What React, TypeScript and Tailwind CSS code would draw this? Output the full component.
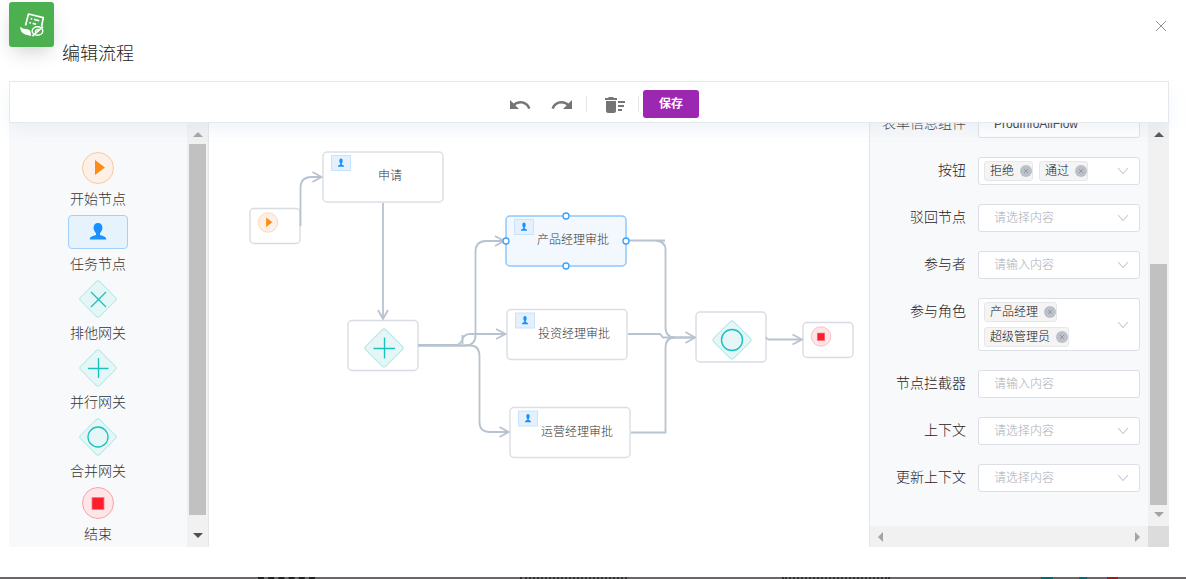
import type { ReactNode } from 'react';
import { MdUndo, MdRedo, MdDeleteSweep } from 'react-icons/md';

const EDGE = '#b8c3d0';

function AppIcon() {
  return (
    <svg viewBox="0 0 45 45" className="h-[45px] w-[45px]" fill="none" stroke="#fff" aria-hidden="true">
      <path d="M16.5 23.5 L19.5 12 L34.3 15.6 L32.6 24.5" strokeWidth="1.7" strokeLinejoin="round" />
      <path d="M21.7 16.6 l1.6 .4 M25 17.4 l5.2 1.3 M20.4 20.6 l1.6 .4 M23.6 21.4 l3.6 .9" strokeWidth="1.6" />
      <path d="M11 25.2 c1.2-.2 2 .3 2.6 1.2 l5 .8 c1.8 .4 3 1.4 3 3 l.6 3.8 -5.200-1.300 c-3.400-1-5.600-3.500-6-7.500z" fill="#fff" stroke="none" />
      <ellipse cx="28.500" cy="29" rx="5.300" ry="4.300" strokeWidth="1.500" />
      <path d="M26.500 31 C25.800 28.500 27.500 26.800 30 27.500" strokeWidth="1.300" />
      <path d="M34 24.600 L23.400 34.200" strokeWidth="1.700" />
    </svg>
  );
}

function PlayShape() {
  return (
    <g>
      <circle r="15.5" fill="#fdf0e6" stroke="#fbc99b" />
      <path d="M-3 -8 L7 -0.500 L-3 7Z" fill="#fd8c19" />
    </g>
  );
}

function StopShape() {
  return (
    <g>
      <circle r="15.5" fill="#fde5e8" stroke="#f8a2aa" />
      <rect x="-6" y="-5.500" width="12" height="12" fill="#fb1f2d" stroke="#f77a83" strokeWidth="0.8" />
    </g>
  );
}

function PersonShape() {
  return (
    <path
      d="M0 -9 C3 -9 4.600 -7 4.400 -4 C4.200 -1.500 3 0 2 1.200 V3 C4.500 4 8.300 4.200 8.300 7.500 H-8.300 C-8.300 4.200 -4.500 4 -2 3 V1.200 C-3 0 -4.200 -1.500 -4.400 -4 C-4.600 -7 -3 -9 0 -9Z"
      fill="#1890ff"
    />
  );
}

function Diamond({ children }: { children: ReactNode }) {
  return (
    <g>
      <rect x="-13.500" y="-13.500" width="27" height="27" rx="2.500" transform="rotate(45)" fill="#e4f7f6" stroke="#b5e8e5" />
      <g fill="none" stroke="#18c1c0" strokeWidth="1.3">{children}</g>
    </g>
  );
}

const CrossMark = () => <path d="M-7 -7 L8 8 M8 -7 L-7 8" />;
const PlusMark = () => <path d="M0.500 -10 V10 M-10 0.500 H10.500" />;
const RingMark = () => <circle r="10" />;

const palette = [
  {
    label: '开始节点',
    icon: <svg className="h-8 w-8" viewBox="-16 -16 32 32"><PlayShape /></svg>,
  },
  {
    label: '任务节点',
    icon: (
      <span className="flex h-[34px] w-[60px] items-center justify-center rounded border border-[#a3d0fb] bg-[#e6f2fc]">
        <svg className="h-5 w-5" viewBox="-10 -10 20 20"><PersonShape /></svg>
      </span>
    ),
  },
  { label: '排他网关', icon: <svg className="size-[38px]" viewBox="-19 -19 38 38"><Diamond><CrossMark /></Diamond></svg> },
  { label: '并行网关', icon: <svg className="size-[38px]" viewBox="-19 -19 38 38"><Diamond><PlusMark /></Diamond></svg> },
  { label: '合并网关', icon: <svg className="size-[38px]" viewBox="-19 -19 38 38"><Diamond><RingMark /></Diamond></svg> },
  { label: '结束', icon: <svg className="h-8 w-8" viewBox="-16 -16 32 32"><StopShape /></svg> },
];

function Triangle({ dir, dark = false }: { dir: 'up' | 'down' | 'left' | 'right'; dark?: boolean }) {
  const points = {
    up: '0,5 5,0 10,5',
    down: '0,0 10,0 5,5',
    left: '5,0 5,10 0,5',
    right: '0,0 5,5 0,10',
  }[dir];
  const wide = dir === 'up' || dir === 'down';
  return (
    <svg className={wide ? 'h-[5px] w-[10px]' : 'h-[10px] w-[5px]'} viewBox={wide ? '0 0 10 5' : '0 0 5 10'} aria-hidden="true">
      <polygon points={points} fill={dark ? '#505050' : '#a3a3a3'} />
    </svg>
  );
}

function VerticalBar({ upDark = false, downDark = false, children }: { upDark?: boolean; downDark?: boolean; children: ReactNode }) {
  return (
    <div className="flex w-[21px] shrink-0 flex-col bg-[#f1f1f1]">
      <div className="flex h-[21px] items-center justify-center pt-0.5"><Triangle dir="up" dark={upDark} /></div>
      <div className="flex flex-1 flex-col px-0.5">{children}</div>
      <div className="flex h-[21px] items-center justify-center pb-0.5"><Triangle dir="down" dark={downDark} /></div>
    </div>
  );
}

function TaskNode({ x, y, label, active = false }: { x: number; y: number; label: string; active?: boolean }) {
  return (
    <g transform={`translate(${x} ${y})`}>
      <rect width="120" height="50" rx="4" fill={active ? '#f3f8ff' : '#fff'} stroke={active ? '#8fc7fb' : '#dbdfe5'} strokeWidth="1.5" />
      <rect x="8.500" y="3.500" width="19" height="15" fill="#e4f1fd" stroke="#c9e3fb" />
      <g transform="translate(18 11) scale(0.38 0.5)"><PersonShape /></g>
      <text x="67" y="28" textAnchor="middle" fontSize="12" fill="#333">{label}</text>
      {active &&
        [[60, 0], [120, 25], [60, 50], [0, 25]].map(([cx, cy]) => (
          <circle key={`${cx}-${cy}`} cx={cx} cy={cy} r="3" fill="#fff" stroke="#3a9ff8" strokeWidth="1.300" />
        ))}
    </g>
  );
}

function BoxNode({ x, y, w, h, children }: { x: number; y: number; w: number; h: number; children: ReactNode }) {
  return (
    <g>
      <rect x={x} y={y} width={w} height={h} rx="4" fill="#fff" stroke="#d8dce3" strokeWidth="1.400" />
      {children}
    </g>
  );
}

function FlowCanvas() {
  return (
    <svg className="h-[424px] w-[660px] shrink-0" viewBox="209 123 660 424" role="img" aria-label="流程图">
      <BoxNode x={250} y={208.500} w={50} h={35}>
        <g transform="translate(268 222.500) scale(0.63)"><PlayShape /></g>
      </BoxNode>
      <TaskNode x={323} y={152} label="申请" />
      <BoxNode x={348} y={320.500} w={70} h={50}>
        <g transform="translate(384 348) scale(1.050)"><Diamond><PlusMark /></Diamond></g>
      </BoxNode>
      <TaskNode x={507} y={309.500} label="投资经理审批" />
      <TaskNode x={510} y={407.500} label="运营经理审批" />
      <BoxNode x={696} y={312} w={70} h={50}>
        <g transform="translate(732 340) scale(1.050)"><Diamond><RingMark /></Diamond></g>
      </BoxNode>
      <BoxNode x={803} y={322.500} w={50} h={35}>
        <g transform="translate(821 336.500) scale(0.63)"><StopShape /></g>
      </BoxNode>
      <g fill="none" stroke={EDGE} strokeWidth="1.800">
        <path d="M300.500 226 V188 Q300.500 177 311.500 177 H322" />
        <path d="M383 203 V319" />
        <path d="M418 345 H455 Q460 345 462 340 Q464 334 470 334 H506" />
        <path d="M418 345.500 H465 Q475.500 345.500 475.500 335 V252 Q475.500 241 486 241 H504" />
        <path d="M418 345.500 H470 Q479.500 345.500 479.500 356 V422 Q479.500 432 490 432 H509" />
        <path d="M462.500 335 V344" />
        <path d="M627 240.500 H665 M655 240.500 Q665.500 241 665.500 250 V327 Q665.500 337.500 675 337.500 H695" />
        <path d="M628 334 H660 L663 337.500 H695" />
        <path d="M631 432.500 H665.500 V348 Q665.500 337.500 675 337.500" />
        <path d="M766 337 Q767 339.500 769 339.500 H802" />
        <path d="M312.500 172 L321.500 177 L312.500 182 M378 310 L383 319 L388 310 M496 329 L505.500 334 L496 339 M495 236 L504 241 L495 246 M499.500 427 L508.500 432 L499.500 437 M685.500 332 L695 337.500 L685.500 343 M792.500 334.500 L802 339.500 L792.500 344.500" />
      </g>
      <TaskNode x={506} y={216} label="产品经理审批" active />
    </svg>
  );
}

function Chevron() {
  return (
    <svg className="h-[10px] w-3" viewBox="0 0 12 10" fill="none" stroke="#c4c8cf" strokeWidth="1.100" aria-hidden="true">
      <path d="M1 2 L6 7.500 L11 2" />
    </svg>
  );
}

function Tag({ text }: { text: string }) {
  return (
    <span className="flex h-5 items-center gap-1.5 rounded-[3px] border border-[#e6e7ea] bg-[#f4f4f5] pl-[5px] text-xs text-[#111]">
      {text}
      <button type="button" aria-label={`移除${text}`} className="flex size-3 items-center justify-center rounded-full bg-[#bcc0c8]">
        <svg className="size-3" viewBox="0 0 12 12" stroke="#8b8f97" strokeWidth="0.8" aria-hidden="true">
          <path d="M4 4 L8 8 M8 4 L4 8" />
        </svg>
      </button>
    </span>
  );
}

type FieldProps = { id: string; label: string; kind: 'text' | 'select' | 'tags'; hint?: string; value?: string; tags?: string[] };

const fields: FieldProps[] = [
  { id: 'form-component', label: '表单信息组件', kind: 'text', value: 'ProdInfoAllFlow' },
  { id: 'buttons', label: '按钮', kind: 'tags', tags: ['拒绝', '通过'] },
  { id: 'reject-node', label: '驳回节点', kind: 'select', hint: '请选择内容' },
  { id: 'participant', label: '参与者', kind: 'select', hint: '请输入内容' },
  { id: 'roles', label: '参与角色', kind: 'tags', tags: ['产品经理', '超级管理员'] },
  { id: 'interceptor', label: '节点拦截器', kind: 'text', hint: '请输入内容' },
  { id: 'context', label: '上下文', kind: 'select', hint: '请选择内容' },
  { id: 'update-context', label: '更新上下文', kind: 'select', hint: '请选择内容' },
];

function Field({ id, label, kind, hint, value, tags }: FieldProps) {
  const box = 'w-full rounded-[3px] border border-[#dcdfe6] bg-white text-xs';
  return (
    <div className="flex shrink-0 gap-3">
      <label id={`${id}-label`} htmlFor={id} className="flex-1 text-right text-sm leading-[27px] whitespace-nowrap text-[#1f2022]">
        {label}
      </label>
      <div className="relative w-[162px]">
        {kind === 'text' && (
          <input id={id} type="text" defaultValue={value} placeholder={hint} className={`${box} block h-7 px-[15px] text-[#222] placeholder:text-[#a9aeb8]`} />
        )}
        {kind === 'select' && (
          <select id={id} className={`${box} block h-7 appearance-none px-[15px] text-[#a9aeb8]`}>
            <option>{hint}</option>
          </select>
        )}
        {kind === 'tags' && (
          <div className={`${box} flex flex-wrap gap-x-1.5 gap-y-[5px] py-[3px] pr-8 pl-[5px]`}>
            {tags?.map((t) => <Tag key={t} text={t} />)}
          </div>
        )}
        {kind === 'select' && (
          <span className="pointer-events-none absolute inset-y-0 right-[11px] flex items-center"><Chevron /></span>
        )}
        {kind === 'tags' && (
          <button id={id} type="button" aria-labelledby={`${id}-label`} className="absolute inset-y-0 right-[11px] flex items-center"><Chevron /></button>
        )}
      </div>
    </div>
  );
}

export default function App() {
  return (
    <div className="flex h-screen min-h-[560px] flex-col overflow-hidden bg-white font-['Liberation_Sans','Noto_Sans_CJK_SC',sans-serif] font-light">
      <header className="flex h-[81px] shrink-0 items-start pt-0.5 pr-[19px] pl-[9px]">
        <div className="size-[45px] rounded-[3px] bg-[#4caf50] shadow-[0_8px_20px_-4px_rgba(0,0,0,0.2)]"><AppIcon /></div>
        <h1 className="ml-2 pt-[38px] text-lg leading-7 text-[#222]">编辑流程</h1>
        <button type="button" aria-label="关闭" className="mt-[18px] ml-auto">
          <svg className="size-3" viewBox="0 0 12 12" stroke="#909399" strokeWidth="1"><path d="M1 1 L11 11 M11 1 L1 11" /></svg>
        </button>
      </header>

      <main className="mr-[17px] mb-[30px] ml-[9px] flex min-h-0 flex-1 flex-col">
        <div className="z-10 flex h-[42px] shrink-0 items-center justify-center border border-[#e6e8eb] bg-white pt-1 pl-[29px] shadow-[0_8px_16px_rgba(205,218,230,0.28)]">
          <div className="flex items-center pt-0.5">
            <button type="button" aria-label="撤销" className="text-[#757575]"><MdUndo size={24} /></button>
            <button type="button" aria-label="重做" className="ml-[18px] text-[#757575]"><MdRedo size={24} /></button>
            <span className="mb-0.5 ml-3 h-4 w-px bg-[#e2e4e8]" />
            <button type="button" aria-label="清空" className="ml-4 text-[#757575]"><MdDeleteSweep size={24} /></button>
            <span className="mb-0.5 ml-[11px] h-4 w-px bg-[#e2e4e8]" />
          </div>
          <button type="button" className="ml-1 h-7 w-14 rounded-[3px] bg-[#9c27b0] text-xs font-bold text-white">保存</button>
        </div>

        <div className="flex min-h-0 flex-1">
          <aside className="flex w-[200px] shrink-0 border-r border-[#e3e6eb] bg-[#f8f9fb]">
            <ul className="flex min-w-0 flex-1 flex-col items-center overflow-hidden pt-[29px]">
              {palette.map((p) => (
                <li key={p.label} className="flex shrink-0 flex-col items-center text-sm text-[#333]">
                  {p.icon}
                  <span className="h-[31px] leading-[31px]">{p.label}</span>
                </li>
              ))}
            </ul>
            <VerticalBar downDark><div className="h-[97%] bg-[#c1c1c1]" /></VerticalBar>
          </aside>

          <section className="flex min-w-0 flex-1 justify-center overflow-hidden"><FlowCanvas /></section>

          <aside className="flex w-[300px] shrink-0 flex-col border-l border-[#e3e6eb] bg-[#f8f9fb]">
            <div className="flex min-h-0 flex-1">
              <form className="flex min-w-0 flex-1 flex-col justify-end gap-[19px] overflow-hidden pr-2 pb-[34px]">
                {fields.map((f) => <Field key={f.id} {...f} />)}
              </form>
              <VerticalBar upDark><div className="mt-auto h-2/3 bg-[#c1c1c1]" /></VerticalBar>
            </div>
            <div className="flex h-[21px] shrink-0 bg-[#f1f1f1]">
              <div className="flex flex-1 items-center justify-between px-2"><Triangle dir="left" /><Triangle dir="right" /></div>
              <div className="w-[21px] bg-[#dcdcdc]" />
            </div>
          </aside>
        </div>
      </main>

      <footer className="flex h-0.5 shrink-0 bg-[#696767] pr-[68px] pl-[258px]">
        <span className="w-[57px] border-t-2 border-dashed border-[#222]" />
        <span className="ml-[205px] w-[107px] border-t-2 border-dotted border-[#333]" />
        <span className="ml-[155px] w-[108px] border-t-2 border-dotted border-[#333]" />
        <span className="ml-auto w-3 bg-[#006b75]" />
        <span className="ml-[26px] w-2 bg-[#006b75]" />
        <span className="ml-5 w-[11px] bg-[#9c1b1b]" />
      </footer>
    </div>
  );
}
